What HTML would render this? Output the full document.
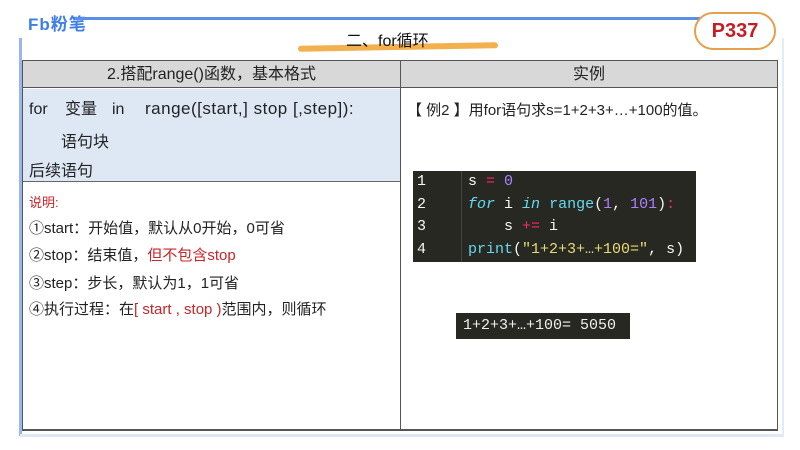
<!DOCTYPE html>
<html><head><meta charset="utf-8"><style>
*{margin:0;padding:0;box-sizing:border-box}
body{width:800px;height:450px;background:#fff;position:relative;overflow:hidden;font-family:"Liberation Sans","Noto Sans CJK SC",sans-serif;color:#222}
.a{position:absolute}
.code{font-family:"Liberation Mono","DejaVu Sans Mono",monospace;font-size:15px}
.w{display:inline-block}
</style></head><body>
<div class="a" style="left:28px;top:10px;font-weight:bold;font-size:17px;color:#3d7fe6;letter-spacing:1px">Fb粉笔</div>
<div class="a" style="left:75px;top:17px;width:690px;height:3px;background:#5b8ee6"></div>
<div class="a" style="left:19px;top:38px;width:3px;height:398px;background:#9ab6ee"></div>
<div class="a" style="left:20px;top:434px;width:764px;height:3px;background:#dfe8f8"></div>
<div class="a" style="left:782px;top:38px;width:2px;height:398px;background:#e3eaf8"></div>
<div class="a" style="left:298px;top:44px;width:200px;height:6px;background:#f2a73c;border-radius:5px;transform:rotate(-1deg);opacity:.9"></div>
<div class="a" style="left:346px;top:27px;font-size:16px;color:#111">二、for循环</div>
<div class="a" style="left:694px;top:12px;width:82px;height:38px;border:2px solid #e4a04a;border-radius:20px;background:#fff;text-align:center;line-height:34px;font-weight:bold;font-size:20px;color:#c41e24">P337</div>
<div class="a" style="left:22px;top:60px;width:756px;height:371px;border:1px solid #555;border-bottom:2px solid #555"></div>
<div class="a" style="left:23px;top:61px;width:754px;height:27px;background:#d8d8d8;border-bottom:1px solid #555"></div>
<div class="a" style="left:400px;top:60px;width:1px;height:371px;background:#555"></div>
<div class="a" style="left:23px;top:61px;width:377px;height:27px;text-align:center;line-height:27px;font-size:16px">2.搭配range()函数，基本格式</div>
<div class="a" style="left:401px;top:61px;width:376px;height:27px;text-align:center;line-height:27px;font-size:16px">实例</div>
<div class="a" style="left:23px;top:89px;width:377px;height:93px;background:#dde8f4;border-bottom:1px solid #666"></div>
<div class="a" style="left:29px;top:98px;font-size:16px;line-height:22px;white-space:nowrap"><span class="w" style="width:36px">for</span><span class="w" style="width:47px">变量</span><span class="w" style="width:33px">in</span><span style="letter-spacing:0.5px;font-size:17px">range([start,] stop [,step]):</span></div>
<div class="a" style="left:61px;top:128px;font-size:16px">语句块</div>
<div class="a" style="left:29px;top:157px;font-size:16px">后续语句</div>
<div class="a" style="left:29px;top:192px;font-size:13px;color:#c8242a">说明:</div>
<div class="a" style="left:29px;top:217px;font-size:15px">①start：开始值，默认从0开始，0可省</div>
<div class="a" style="left:29px;top:244px;font-size:15px">②stop：结束值，<span style="color:#c8242a">但不包含stop</span></div>
<div class="a" style="left:29px;top:272px;font-size:15px">③step：步长，默认为1，1可省</div>
<div class="a" style="left:29px;top:298px;font-size:15px">④执行过程：在<span style="color:#c8242a">[ start , stop )</span>范围内，则循环</div>
<div class="a" style="left:407px;top:99px;font-size:15px">【 例2 】用for语句求s=1+2+3+…+100的值。</div>
<div class="a code" style="left:413px;top:171px;width:283px;height:91px;background:#272822;color:#f8f8f2;line-height:22.5px">
<div class="a" style="left:48px;top:0;width:1px;height:91px;background:#444"></div>
<div class="a" style="left:4px;top:0">1<br>2<br>3<br>4</div>
<div class="a" style="left:55px;top:0;white-space:pre">s <span style="color:#f92672">=</span> <span style="color:#ae81ff">0</span>
<span style="color:#66d9ef;font-style:italic">for</span> i <span style="color:#66d9ef;font-style:italic">in</span> <span style="color:#66d9ef">range</span>(<span style="color:#ae81ff">1</span>, <span style="color:#ae81ff">101</span>)<span style="color:#f92672">:</span>
    s <span style="color:#f92672">+=</span> i
<span style="color:#66d9ef">print</span>(<span style="color:#e6db74">"1+2+3+…+100="</span>, s)</div></div>
<div class="a code" style="left:456px;top:313px;width:174px;height:26px;background:#272822;color:#eee;line-height:26px;padding-left:7px;white-space:nowrap">1+2+3+…+100= 5050</div>
</body></html>
